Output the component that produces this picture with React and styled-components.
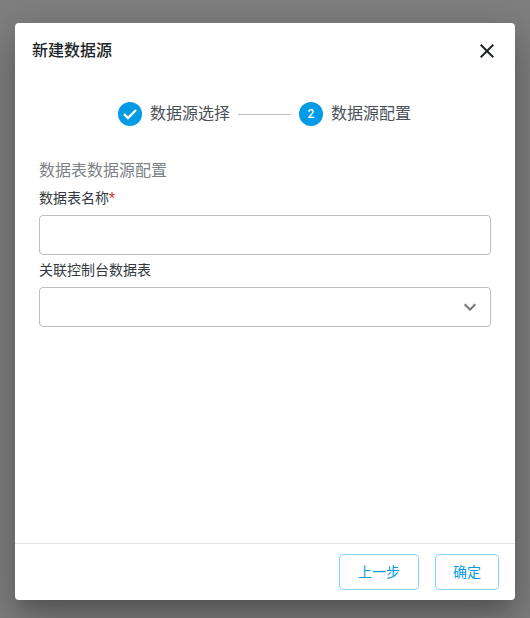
import React from 'react';
import styled, { createGlobalStyle } from 'styled-components';
import { MdClose, MdExpandMore } from 'react-icons/md';

const GlobalStyle = createGlobalStyle`
  html, body {
    margin: 0;
    padding: 0;
    height: 100%;
    overflow: hidden;
  }
  body {
    font-family: Roboto, "Noto Sans CJK SC", sans-serif;
  }
`;

const Backdrop = styled.div`
  display: flex;
  justify-content: center;
  height: 618px;
  padding-top: 23px;
  box-sizing: border-box;
  background: #7f7f7f;
`;

const Dialog = styled.div`
  display: flex;
  flex-direction: column;
  width: 500px;
  height: 577px;
  background: #fff;
  border-radius: 4px;
  box-shadow: 0 11px 15px -7px rgba(0, 0, 0, 0.2), 0 24px 38px 3px rgba(0, 0, 0, 0.14),
    0 9px 46px 8px rgba(0, 0, 0, 0.12);
`;

const Header = styled.div`
  display: flex;
  align-items: center;
  justify-content: space-between;
  height: 54px;
  padding: 0 16px 2px 17px;
  box-sizing: border-box;
`;

const Title = styled.h2`
  margin: 0;
  font-size: 16px;
  font-weight: 500;
  color: #212529;
`;

const CloseButton = styled.button`
  display: flex;
  margin-top: 3px;
  padding: 0;
  border: none;
  background: none;
  color: #212529;
`;

const Stepper = styled.div`
  display: flex;
  align-items: center;
  justify-content: center;
  gap: 8px;
  margin-top: 25px;
  padding-right: 1px;
`;

const StepIcon = styled.span`
  display: flex;
  align-items: center;
  justify-content: center;
  width: 24px;
  height: 24px;
  border-radius: 50%;
  background: #039be5;
  color: #fff;
  font-size: 12px;
  font-weight: 500;
`;

const StepLabel = styled.span`
  font-size: 16px;
  line-height: 24px;
  color: #495057;
`;

const Connector = styled.span`
  width: 53px;
  height: 1px;
  background: #bdbdbd;
`;

const Body = styled.div`
  flex: 1;
  padding: 0 24px;
`;

const SectionTitle = styled.h3`
  margin: 33px 0 5px;
  font-size: 16px;
  line-height: 24px;
  font-weight: 400;
  color: #7d8287;
`;

const Label = styled.label`
  display: block;
  font-size: 14px;
  line-height: 20px;
  color: #343a40;
`;

const Required = styled.span`
  color: #e53935;
`;

const TextInput = styled.input`
  display: block;
  width: 100%;
  height: 40px;
  margin: 7px 0 5px;
  box-sizing: border-box;
  border: 1px solid #bdbdbd;
  border-radius: 4px;
  background: #fff;
  outline: none;
`;

const Select = styled.div`
  display: flex;
  align-items: center;
  justify-content: flex-end;
  height: 40px;
  margin-top: 7px;
  padding-right: 8px;
  box-sizing: border-box;
  border: 1px solid #bdbdbd;
  border-radius: 4px;
  color: #757575;
`;

const Footer = styled.div`
  display: flex;
  justify-content: flex-end;
  gap: 16px;
  height: 57px;
  padding: 10px 16px 0 0;
  box-sizing: border-box;
  border-top: 1px solid #e4e4e4;
`;

const FooterButton = styled.button`
  width: ${({ $width }) => $width}px;
  height: 36px;
  padding: 0 0 2px;
  border: 1px solid #81d4fa;
  border-radius: 4px;
  background: #fff;
  color: #039be5;
  font-family: inherit;
  font-size: 14px;
`;

function CheckMark() {
	return (
		<svg width="16" height="16" viewBox="0 0 16 16" fill="none">
			<path d="M2 8.2 6 12l8-8" stroke="currentColor" strokeWidth="2.4" />
		</svg>
	);
}

export default function App() {
	return (
		<>
			<GlobalStyle />
			<Backdrop>
				<Dialog>
					<Header>
						<Title>新建数据源</Title>
						<CloseButton>
							<MdClose size={24} />
						</CloseButton>
					</Header>
					<Stepper>
						<StepIcon>
							<CheckMark />
						</StepIcon>
						<StepLabel>数据源选择</StepLabel>
						<Connector />
						<StepIcon>2</StepIcon>
						<StepLabel>数据源配置</StepLabel>
					</Stepper>
					<Body>
						<SectionTitle>数据表数据源配置</SectionTitle>
						<Label>
							数据表名称<Required>*</Required>
						</Label>
						<TextInput />
						<Label>关联控制台数据表</Label>
						<Select>
							<MdExpandMore size={24} />
						</Select>
					</Body>
					<Footer>
						<FooterButton $width={80}>上一步</FooterButton>
						<FooterButton $width={64}>确定</FooterButton>
					</Footer>
				</Dialog>
			</Backdrop>
		</>
	);
}
